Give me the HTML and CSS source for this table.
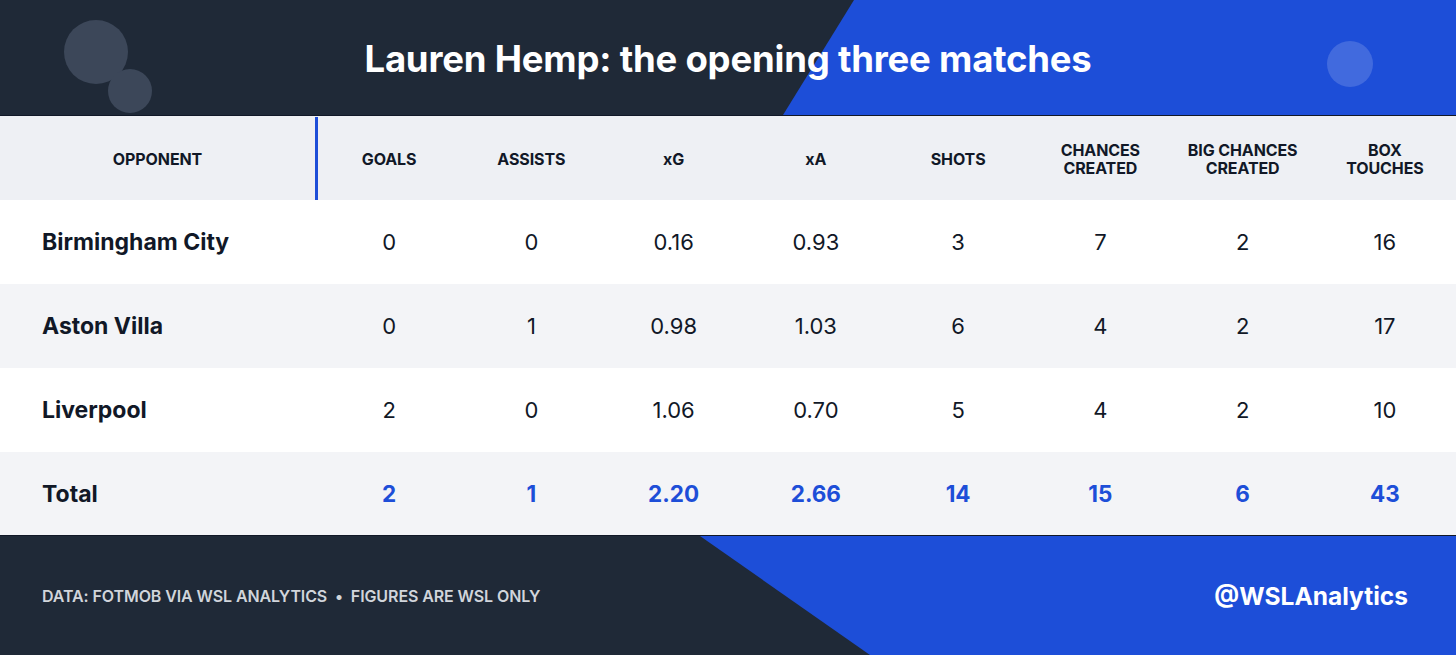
FILE: index.html
```html
<!DOCTYPE html>
<html lang="en">
<head>
<meta charset="utf-8">
<title>Lauren Hemp: the opening three matches</title>
<link rel="stylesheet" href="styles.css">
</head>
<body>
<div class="card">
  <header class="top">
    <span class="dot dot-a"></span>
    <span class="dot dot-b"></span>
    <span class="dot dot-c"></span>
    <h1 class="title">Lauren Hemp: the opening three matches</h1>
  </header>
  <div class="table">
    <div class="row head">
      <div class="cell name-head">OPPONENT</div>
      <div class="cell">GOALS</div>
      <div class="cell">ASSISTS</div>
      <div class="cell lower">xG</div>
      <div class="cell lower">xA</div>
      <div class="cell">SHOTS</div>
      <div class="cell">CHANCES<br>CREATED</div>
      <div class="cell">BIG CHANCES<br>CREATED</div>
      <div class="cell">BOX<br>TOUCHES</div>
    </div>
    <div class="row">
      <div class="cell name">Birmingham City</div>
      <div class="cell">0</div><div class="cell">0</div><div class="cell">0.16</div><div class="cell">0.93</div>
      <div class="cell">3</div><div class="cell">7</div><div class="cell">2</div><div class="cell">16</div>
    </div>
    <div class="row alt">
      <div class="cell name">Aston Villa</div>
      <div class="cell">0</div><div class="cell">1</div><div class="cell">0.98</div><div class="cell">1.03</div>
      <div class="cell">6</div><div class="cell">4</div><div class="cell">2</div><div class="cell">17</div>
    </div>
    <div class="row">
      <div class="cell name">Liverpool</div>
      <div class="cell">2</div><div class="cell">0</div><div class="cell">1.06</div><div class="cell">0.70</div>
      <div class="cell">5</div><div class="cell">4</div><div class="cell">2</div><div class="cell">10</div>
    </div>
    <div class="row alt total">
      <div class="cell name">Total</div>
      <div class="cell">2</div><div class="cell">1</div><div class="cell">2.20</div><div class="cell">2.66</div>
      <div class="cell">14</div><div class="cell">15</div><div class="cell">6</div><div class="cell">43</div>
    </div>
  </div>
  <footer class="bottom">
    <p class="source">DATA: FOTMOB VIA WSL ANALYTICS &nbsp;•&nbsp; FIGURES ARE WSL ONLY</p>
    <p class="handle">@WSLAnalytics</p>
  </footer>
</div>
</body>
</html>
```
FILE: styles.css
```css
* { box-sizing: border-box; }
html, body { margin: 0; padding: 0; }
body {
  width: 1456px;
  height: 655px;
  overflow: hidden;
  font-family: Inter, "Noto Sans", sans-serif;
  color: #111827;
  background: #1f2937;
}
.card { display: flex; flex-direction: column; width: 1456px; height: 655px; }

.top {
  position: relative;
  height: 116px;
  background: #1f2937;
  display: flex;
  align-items: center;
  justify-content: center;
  overflow: hidden;
  border-bottom: 1px solid #111827;
}
.top::before {
  content: "";
  position: absolute;
  inset: 0;
  background: #1d4ed8;
  clip-path: polygon(854px 0, 100% 0, 100% 100%, 783px 100%);
}
.dot { position: absolute; border-radius: 50%; }
.dot-a { left: 64px; top: 20px; width: 64px; height: 64px; background: #3c4759; }
.dot-b { left: 108px; top: 69px; width: 44px; height: 44px; background: #3c4759; }
.dot-c { left: 1327px; top: 41px; width: 46px; height: 46px; background: rgba(255,255,255,0.16); }
.title {
  position: relative;
  margin: 0 0 -2px 0;
  font-size: 36.5px;
  font-weight: 700;
  color: #ffffff;
  letter-spacing: -0.2px;
}

.table { display: flex; flex-direction: column; }
.row {
  display: grid;
  grid-template-columns: 318px repeat(8, 1fr);
  height: 84px;
  background: #ffffff;
  font-size: 22px;
  color: #111827;
}
.row.alt { background: #f3f4f7; }
.row.total { height: 83px; color: #1d4ed8; font-weight: 700; font-size: 22.5px; }
.cell {
  display: flex;
  align-items: center;
  justify-content: center;
  text-align: center;
}
.cell.name {
  justify-content: flex-start;
  padding-left: 42px;
  font-weight: 700;
  font-size: 23px;
  color: #111827;
}
.row.head {
  background: #eef0f4;
  font-size: 16px;
  font-weight: 700;
  line-height: 18px;
  letter-spacing: -0.1px;
  padding-top: 1px;
}
.row.head .name-head { border-right: 3px solid #1d4ed8; }

.bottom {
  position: relative;
  flex: 1;
  background: #1f2937;
  display: flex;
  align-items: center;
  justify-content: space-between;
  padding: 0 48px 0 42px;
  border-top: 1px solid #111827;
}
.bottom::before {
  content: "";
  position: absolute;
  inset: 0;
  background: #1d4ed8;
  clip-path: polygon(700px 0, 100% 0, 100% 100%, 870px 100%);
}
.source {
  position: relative;
  margin: 0;
  font-size: 16px;
  font-weight: 600;
  color: #d1d5db;
  letter-spacing: -0.1px;
}
.handle {
  position: relative;
  margin: 0;
  font-size: 24.5px;
  font-weight: 700;
  color: #ffffff;
}
```
